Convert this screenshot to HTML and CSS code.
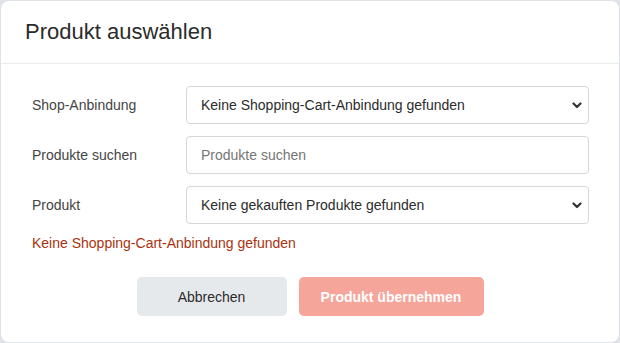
FILE: index.html
```html
<!DOCTYPE html>
<html lang="de">
<head>
    <meta charset="UTF-8">
    <meta name="viewport" content="width=device-width, initial-scale=1.0">
    <title>Produkt auswählen</title>
    <link rel="stylesheet" href="styles.css">
</head>
<body>
    <div class="modal">
        <div class="modal-header">
            <h2>Produkt auswählen</h2>
        </div>
        <div class="modal-body">
            <div class="form-row">
                <label for="shop">Shop-Anbindung</label>
                <div class="select-wrap">
                    <select id="shop">
                        <option>Keine Shopping-Cart-Anbindung gefunden</option>
                    </select>
                    <svg class="chevron" width="10" height="7" viewBox="0 0 10 7"><path d="M1.5 1.5 L5 5 L8.5 1.5" fill="none" stroke="#333" stroke-width="2.2" stroke-linecap="round" stroke-linejoin="round"/></svg>
                </div>
            </div>
            <div class="form-row">
                <label for="search">Produkte suchen</label>
                <input type="text" id="search" placeholder="Produkte suchen">
            </div>
            <div class="form-row">
                <label for="product">Produkt</label>
                <div class="select-wrap">
                    <select id="product">
                        <option>Keine gekauften Produkte gefunden</option>
                    </select>
                    <svg class="chevron" width="10" height="7" viewBox="0 0 10 7"><path d="M1.5 1.5 L5 5 L8.5 1.5" fill="none" stroke="#333" stroke-width="2.2" stroke-linecap="round" stroke-linejoin="round"/></svg>
                </div>
            </div>
            <p class="error-text">Keine Shopping-Cart-Anbindung gefunden</p>
        </div>
        <div class="modal-footer">
            <button class="btn btn-secondary">Abbrechen</button>
            <button class="btn btn-primary" disabled>Produkt übernehmen</button>
        </div>
    </div>
</body>
</html>
```
FILE: styles.css
```css
body {
    font-family: "Liberation Sans", Arial, sans-serif;
    background-color: #dfe3e8;
    margin: 0;
    padding: 1px;
}
.modal {
    background-color: #fff;
    border-radius: 8px;
    height: 341px;
    box-sizing: border-box;
}
.modal-header {
    padding: 16px 24px;
    border-bottom: 1px solid #e9ecef;
}
.modal-header h2 {
    margin: 0;
    font-size: 22px;
    font-weight: normal;
    line-height: 30px;
    color: #2b2b2b;
}
.modal-body {
    padding: 22px 30px 0 31px;
    display: flex;
    flex-direction: column;
    gap: 12px;
}
.form-row {
    display: flex;
    align-items: center;
}
.form-row label {
    width: 154px;
    flex-shrink: 0;
    font-size: 14px;
    color: #444;
}
.select-wrap {
    position: relative;
    flex: 1;
    display: flex;
}
select,
input[type="text"] {
    flex: 1;
    height: 38px;
    box-sizing: border-box;
    border: 1px solid #d3d7dc;
    border-radius: 4px;
    background-color: #fff;
    font-family: "Liberation Sans", Arial, sans-serif;
    font-size: 14px;
    color: #2b2b2b;
    padding: 0 14px;
    margin: 0;
    outline: none;
}
select {
    appearance: none;
    -webkit-appearance: none;
}
input[type="text"]::placeholder {
    color: #767676;
}
.chevron {
    position: absolute;
    right: 7px;
    top: 16px;
    pointer-events: none;
}
.error-text {
    margin: -3px 0 0;
    font-size: 14px;
    line-height: 20px;
    color: #a8320f;
}
.modal-footer {
    display: flex;
    justify-content: center;
    gap: 12px;
    padding: 24px 0 0;
}
.btn {
    height: 39px;
    border: none;
    border-radius: 5px;
    font-family: "Liberation Sans", Arial, sans-serif;
    font-size: 14px;
}
.btn-secondary {
    width: 150px;
    background-color: #e6e9ec;
    color: #2b2b2b;
}
.btn-primary {
    width: 185px;
    background-color: #f6a59b;
    color: #fff;
    font-weight: bold;
}
```
